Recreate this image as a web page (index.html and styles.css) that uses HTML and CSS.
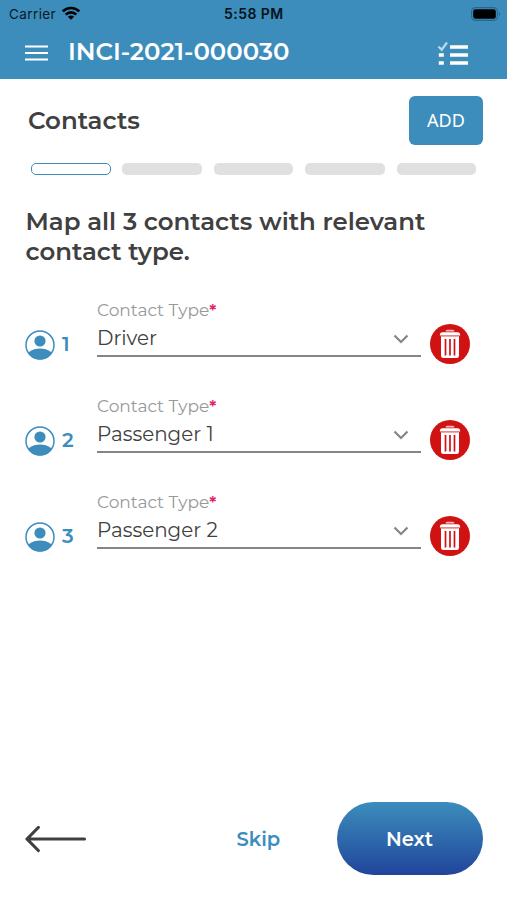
FILE: index.html
```html
<!DOCTYPE html>
<html lang="en">
<head>
<meta charset="utf-8">
<title>Contacts</title>
<link rel="stylesheet" href="styles.css">
</head>
<body>
<svg width="0" height="0" class="defs" aria-hidden="true">
  <symbol id="person" viewBox="0 0 30 30">
    <clipPath id="disc"><circle cx="15" cy="15" r="14.500"/></clipPath>
    <circle cx="15" cy="15" r="14" fill="#fff" stroke="#3c8dbc" stroke-width="1.500"/>
    <circle cx="15" cy="11" r="5.600" fill="#3c8dbc"/>
    <ellipse cx="15" cy="26.3" rx="13" ry="7.800" fill="#3c8dbc" clip-path="url(#disc)"/>
  </symbol>
  <symbol id="trash" viewBox="0 0 40 40">
    <circle cx="20" cy="20" r="20" fill="#d01212"/>
    <path d="M15.500 7.400q0-1.600 1.600-1.600h5.800q1.600 0 1.600 1.600z" fill="#fff" opacity=".75"/>
    <path d="M9.800 11.500q0-3.300 2.800-3.300h14.800q2.800 0 2.800 3.300z" fill="#fff"/>
    <path d="M11 12.300h18v19.500q0 2.300-2.300 2.300h-13.400q-2.300 0-2.300-2.300z" fill="#fff"/>
    <path d="M10.500 12h19" stroke="#e88989" stroke-width=".8"/>
    <path d="M15.500 15v16.500M20 15v16.500M24.500 15v16.500" stroke="#d01212" stroke-width="1.700"/>
  </symbol>
  <symbol id="chevron" viewBox="0 0 16 10">
    <path d="M1.500 1.500L8 8l6.500-6.500" fill="none" stroke="#858585" stroke-width="2.200"/>
  </symbol>
</svg>

<header class="header">
  <div class="status">
    <span class="carrier">Carrier</span>
    <svg class="wifi" width="20" height="14" viewBox="0 0 20 14">
      <g fill="none" stroke="#000" stroke-width="2.700">
        <path d="M1.700 5.400a11.800 11.800 0 0 1 16.600 0"/>
        <path d="M4.700 8.600a7.600 7.600 0 0 1 10.600 0"/>
      </g>
      <path d="M6.900 10.800a4.400 4.400 0 0 1 6.200 0L10 13.800z"/>
    </svg>
    <span class="time">5:58 PM</span>
    <svg class="battery" width="31" height="14" viewBox="0 0 31 14">
      <rect x=".6" y=".6" width="25.800" height="12.800" rx="3.800" fill="none" stroke="#2b668a" stroke-width="1.100"/>
      <rect x="2.200" y="2.200" width="22.600" height="9.600" rx="2.200"/>
      <path d="M28 4.800q2.300 2.200 0 4.400z" fill="#2b668a"/>
    </svg>
  </div>
  <div class="bar">
    <svg class="menu" width="23" height="16" viewBox="0 0 23 16"><path d="M0 1.500h23M0 8h23M0 14.500h23" stroke="#fff" stroke-width="2"/></svg>
    <h1 class="title">INCI-2021-000030</h1>
    <svg class="checklist" width="32" height="25" viewBox="0 0 32 25">
      <path d="M1.500 5.500l3.200 3.200L10 1.500" fill="none" stroke="#b9d9eb" stroke-width="2.200"/>
      <path d="M13 6h18M13 14h18M13 22h18" stroke="#fff" stroke-width="3.600"/>
      <path d="M1.800 14h5M1.800 22h5" stroke="#fff" stroke-width="3.600"/>
    </svg>
  </div>
</header>

<main class="content">
  <div class="section-head">
    <h2 class="section-title">Contacts</h2>
    <button class="add"><span>ADD</span></button>
  </div>
  <div class="steps">
    <i class="step current"></i><i class="step"></i><i class="step"></i><i class="step"></i><i class="step"></i>
  </div>
  <p class="prompt">Map all 3 contacts with relevant<br>contact type.</p>

  <div class="contacts">
    <div class="contact">
      <svg class="person"><use href="#person"/></svg>
      <span class="number">1</span>
      <div class="field">
        <div class="label">Contact Type<span class="required">*</span></div>
        <div class="select"><span>Driver</span><svg class="chevron"><use href="#chevron"/></svg></div>
      </div>
      <svg class="trash"><use href="#trash"/></svg>
    </div>
    <div class="contact">
      <svg class="person"><use href="#person"/></svg>
      <span class="number">2</span>
      <div class="field">
        <div class="label">Contact Type<span class="required">*</span></div>
        <div class="select"><span>Passenger 1</span><svg class="chevron"><use href="#chevron"/></svg></div>
      </div>
      <svg class="trash"><use href="#trash"/></svg>
    </div>
    <div class="contact">
      <svg class="person"><use href="#person"/></svg>
      <span class="number">3</span>
      <div class="field">
        <div class="label">Contact Type<span class="required">*</span></div>
        <div class="select"><span>Passenger 2</span><svg class="chevron"><use href="#chevron"/></svg></div>
      </div>
      <svg class="trash"><use href="#trash"/></svg>
    </div>
  </div>
</main>

<footer class="footer">
  <svg class="back" width="62" height="28" viewBox="0 0 62 28"><path d="M13.300 2.500L2 14l11.300 11.500M2 14h57.500" fill="none" stroke="#404040" stroke-width="3.200" stroke-linecap="round" stroke-linejoin="round"/></svg>
  <span class="skip">Skip</span>
  <button class="next"><span>Next</span></button>
</footer>
</body>
</html>
```
FILE: styles.css
```css
* { box-sizing: border-box; }
body {
  margin: 0;
  height: 900px;
  display: flex;
  flex-direction: column;
  overflow: hidden;
  background: #fff;
  color: #404040;
  font-family: Montserrat, Inter, sans-serif;
  white-space: nowrap;
}
h1, h2, p { margin: 0; }
svg { display: block; flex: none; }
button { border: 0; padding: 0; font-family: inherit; color: #fff; }
.defs { position: absolute; }

.header { height: 79px; background: #3c8dbc; }
.status {
  height: 28px;
  padding: 0 7px 0 9px;
  display: grid;
  grid-template-columns: 52px 163px 1fr auto;
  align-items: center;
  color: #0b1a24;
  font-family: Inter, sans-serif;
  font-size: 13.5px;
  line-height: 28px;
}
.carrier { letter-spacing: .4px; }
.wifi { margin-top: -2px; }
.time { color: #06121a; font-size: 14px; font-weight: 600; letter-spacing: .45px; }
.battery { margin: -1px -2px 0 0; }
.bar {
  height: 51px;
  padding: 0 38px 0 25px;
  display: flex;
  align-items: center;
}
.menu { margin-top: -2px; }
.title {
  flex: 1;
  margin: -6px 0 0 20px;
  color: #fff;
  font-size: 24.400px;
  font-weight: 600;
  line-height: 30px;
}
.checklist { margin-top: -1px; }

.content { flex: 1; }
.section-head {
  margin: 17px 24px 0 28px;
  height: 49px;
  display: flex;
  align-items: center;
  justify-content: space-between;
}
.section-title { margin-top: -2px; font-size: 24.500px; font-weight: 600; line-height: 30px; }
.add {
  width: 74px;
  height: 49px;
  border-radius: 6px;
  background: #3c8dbc;
  font: 18px/49px "Noto Sans", sans-serif;
}
.steps {
  margin: 18px 31px 0;
  display: grid;
  grid-template-columns: repeat(5, 79.500px);
  justify-content: space-between;
}
.step { height: 12px; border-radius: 5px; background: #e0e0e0; }
.current { border: 1.500px solid #3c8dbc; background: #fff; }
.prompt {
  margin: 31px 0 0 25.500px;
  font-size: 24.450px;
  font-weight: 600;
  line-height: 30px;
}

.contacts { margin-top: 33px; display: grid; gap: 36px; }
.contact {
  height: 60px;
  padding: 0 37.500px 0 25px;
  display: flex;
  align-items: flex-end;
}
.person { width: 30px; height: 30px; margin-bottom: -.5px; }
.number {
  width: 35px;
  margin: 0 0 1px 7px;
  color: #3c8dbc;
  font-size: 20px;
  font-weight: 600;
  line-height: 28px;
}
.field { flex: 1; margin: 0 8.500px 2px 0; border-bottom: 2px solid #858585; }
.label { height: 24px; font-size: 17px; line-height: 26px; color: #999; }
.required { color: #e0245e; font-weight: 600; }
.select {
  height: 34px;
  padding-right: 12px;
  display: flex;
  justify-content: space-between;
  font-size: 19.900px;
  line-height: 35px;
}
.chevron { width: 16px; height: 10px; margin-top: 13px; }
.trash { width: 40px; height: 40px; margin-bottom: -5px; }

.footer {
  height: 98px;
  padding: 0 24px 0 25px;
  display: flex;
  align-items: flex-start;
}
.back { margin-top: 23px; }
.skip {
  width: 100px;
  margin-left: 149.500px;
  color: #3c8dbc;
  font-size: 19.500px;
  font-weight: 600;
  line-height: 74px;
}
.next {
  width: 146px;
  height: 73px;
  border-radius: 37px;
  background: linear-gradient(#3c8dbc, #20459b);
  font-size: 19.500px;
  font-weight: 600;
}
```
